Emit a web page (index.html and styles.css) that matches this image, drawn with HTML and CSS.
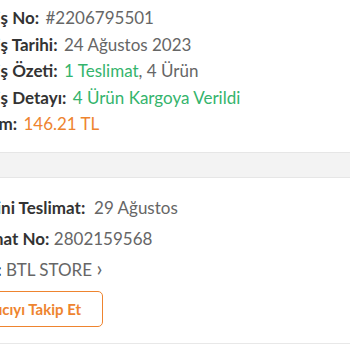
FILE: index.html
```html
<!DOCTYPE html>
<html lang="tr">
<head>
<meta charset="utf-8">
<link rel="stylesheet" href="styles.css">
</head>
<body>
<section class="summary">
  <div class="row"><span class="label">Sipariş No:</span> <span class="val">#2206795501</span></div>
  <div class="row"><span class="label">Sipariş Tarihi:</span> <span class="val">24 Ağustos 2023</span></div>
  <div class="row"><span class="label">Sipariş Özeti:</span> <span class="val"><span class="green">1 Teslimat</span>, 4 Ürün</span></div>
  <div class="row"><span class="label">Sipariş Detayı:</span> <span class="val green">4 Ürün Kargoya Verildi</span></div>
  <div class="row"><span class="label">Toplam:</span> <span class="val orange">146.21 TL</span></div>
</section>
<div class="band"></div>
<section class="delivery">
  <div class="row"><span class="label">Tahmini Teslimat:</span>&nbsp; <span class="val">29 Ağustos</span></div>
  <div class="row"><span class="label">Teslimat No:</span> <span class="val">2802159568</span></div>
  <div class="row"><span class="label">Satıcı:</span> <span class="val">BTL STORE <span class="chev">&#x203A;</span></span></div>
  <button class="follow">Satıcıyı Takip Et</button>
</section>
<div class="rule"></div>
</body>
</html>
```
FILE: styles.css
```css
html, body {
  margin: 0;
  padding: 0;
  background: #fff;
  overflow: hidden;
}
body {
  width: 350px;
  height: 350px;
  font-family: Lato, "Noto Sans", sans-serif;
  color: #666;
}
.summary {
  margin-left: -42px;
  padding-top: 5px;
  height: 152px;
  box-sizing: border-box;
}
.row {
  font-size: 17px;
  line-height: 26.6px;
  white-space: nowrap;
}
.label {
  font-weight: 700;
  color: #333;
  margin-right: 2px;
}
.val { color: #666; }
.green { color: #34b46c; }
.orange { color: #ee842f; }
.chev { font-size: 21px; line-height: 0; }
.band {
  height: 24px;
  background: #f3f3f3;
  border-top: 1px solid #e6e6e6;
  border-bottom: 1px solid #e6e6e6;
}
.delivery {
  margin-left: -44px;
  padding-top: 14px;
}
.delivery .row { line-height: 31px; }
.delivery .label { margin-right: 0; }
.follow {
  display: block;
  margin-top: 6px;
  font-family: Lato, "Noto Sans", sans-serif;
  font-size: 15px;
  font-weight: 700;
  color: #ee842f;
  background: #fff;
  border: 1.5px solid #ee842f;
  border-radius: 5px;
  height: 36px;
  padding: 0 21px 0 20px;
}
.rule {
  margin-top: 16px;
  border-top: 1px solid #e8e8e8;
}
```
